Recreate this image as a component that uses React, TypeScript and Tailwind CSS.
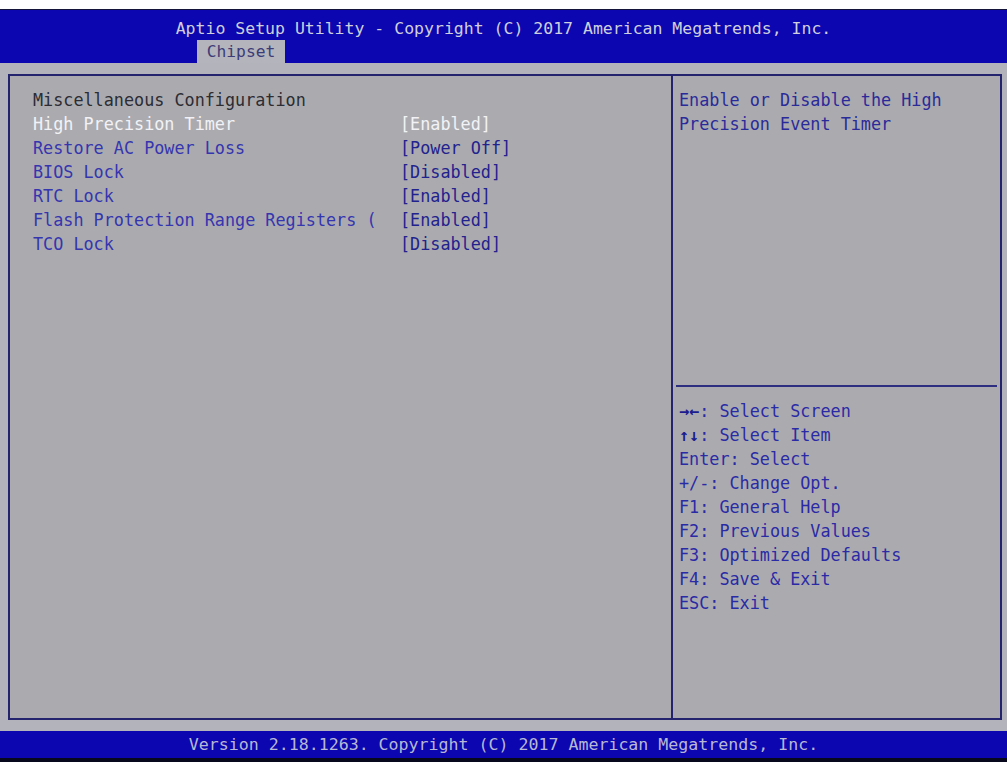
const items = [
  { label: "High Precision Timer", value: "[Enabled]", active: true },
  { label: "Restore AC Power Loss", value: "[Power Off]" },
  { label: "BIOS Lock", value: "[Disabled]" },
  { label: "RTC Lock", value: "[Enabled]" },
  { label: "Flash Protection Range Registers (", value: "[Enabled]" },
  { label: "TCO Lock", value: "[Disabled]" },
];

const keys = [
  { arrows: "→←", text: ": Select Screen" },
  { arrows: "↑↓", text: ": Select Item" },
  { text: "Enter: Select" },
  { text: "+/-: Change Opt." },
  { text: "F1: General Help" },
  { text: "F2: Previous Values" },
  { text: "F3: Optimized Defaults" },
  { text: "F4: Save & Exit" },
  { text: "ESC: Exit" },
];

export default function App() {
  return (
    <div className="w-[1007px] h-[762px] bg-white flex flex-col overflow-hidden font-['DejaVu_Sans_Mono',_'Liberation_Mono',_monospace] text-[16.8px] leading-[24px] whitespace-pre">
      <div className="h-[9px] bg-white" />
      {/* header */}
      <div className="h-[54px] bg-[#0c06b0] border-t border-[#14143a] flex flex-col">
        <div className="mt-[7px] h-[23px] flex items-center justify-center text-[#cfd0dc] text-[16.5px]">
          Aptio Setup Utility - Copyright (C) 2017 American Megatrends, Inc.
        </div>
        <div className="flex-1 flex">
          <div className="ml-[197px] w-[88px] bg-[#b4b4bc] text-[#3c3c78] text-[16.3px] leading-[23px] text-center">
            Chipset
          </div>
        </div>
      </div>

      {/* body */}
      <div className="h-[668px] bg-[#b3b3bb] pt-[11px] pl-[8px] pr-[5px]">
        <div className="h-[646px] border-2 border-[#24246e] bg-[#ababaf] flex">
          <div className="w-[661px] pl-[23px] pt-[12px] flex flex-col">
            <div className="text-[#2c2c34]">Miscellaneous Configuration</div>
            {items.map((it) => (
              <div key={it.label} className="flex">
                <div className={`w-[367px] ${it.active ? "text-[#f2f2f6]" : "text-[#3535b0]"}`}>{it.label}</div>
                <div className={it.active ? "text-[#f2f2f6]" : "text-[#22228e]"}>{it.value}</div>
              </div>
            ))}
          </div>
          <div className="w-[2px] bg-[#24246e]" />
          <div className="flex-1 flex flex-col">
            <div className="h-[309px] pl-[6px] pt-[12px] text-[#2a2a9a]">
              <div>Enable or Disable the High</div>
              <div>Precision Event Timer</div>
            </div>
            <div className="h-[2px] bg-[#2e2e80] mx-[3px]" />
            <div className="pl-[6px] pt-[12px] flex flex-col text-[#2a2aa6]">
              {keys.map((k) => (
                <div key={k.text}>
                  {k.arrows && <span className="font-bold text-[#1c1c90]">{k.arrows}</span>}
                  {k.text}
                </div>
              ))}
            </div>
          </div>
        </div>
      </div>

      {/* footer */}
      <div className="h-[27px] bg-[#0c06b0] flex items-center justify-center text-[#b8b8d4] text-[16.6px]">
        Version 2.18.1263. Copyright (C) 2017 American Megatrends, Inc.
      </div>
      <div className="flex-1 bg-[#08081c]" />
    </div>
  );
}
